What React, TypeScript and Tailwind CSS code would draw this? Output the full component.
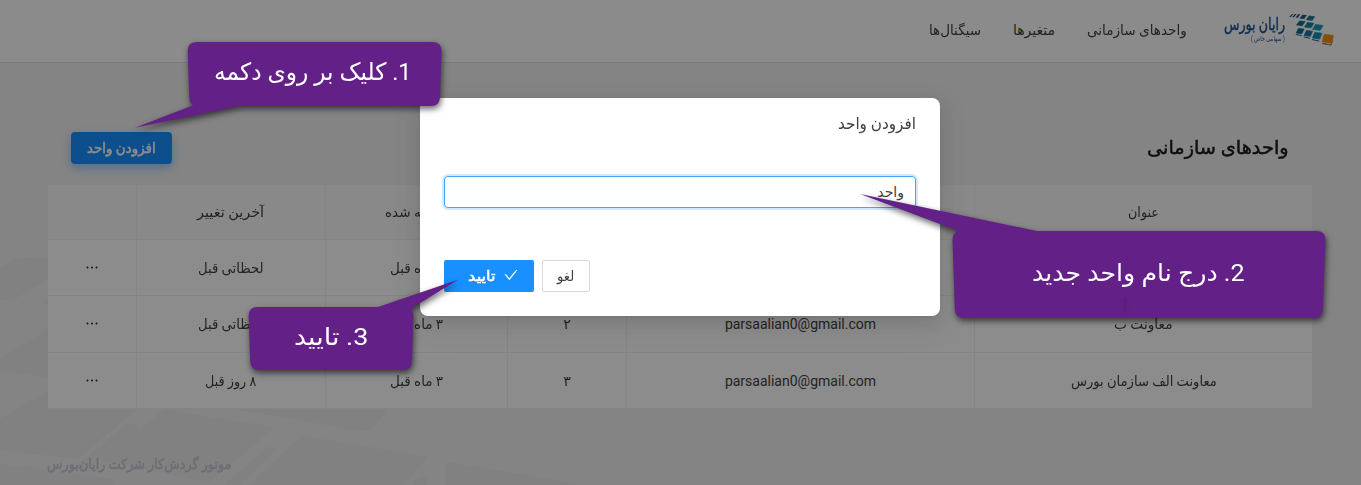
import { useLayoutEffect, useRef, type ReactNode } from "react";
import { AiOutlineCheck } from "react-icons/ai";

const FONT = "font-['Roboto','DejaVu_Sans',sans-serif]";
const MEDIUM = "[-webkit-text-stroke:0.5px_currentColor]";

/* Text condensed horizontally so that it fills the width of its box. */
function Fit({ className = "", children }: { className?: string; children: ReactNode }) {
  const box = useRef<HTMLSpanElement>(null);
  const ink = useRef<HTMLSpanElement>(null);
  useLayoutEffect(() => {
    if (!box.current || !ink.current) return;
    const k = box.current.clientWidth / ink.current.offsetWidth;
    ink.current.style.transform = `scaleX(${k})`;
  }, []);
  return (
    <span ref={box} className={`flex shrink-0 justify-start ${className}`}>
      <span ref={ink} className="inline-block shrink-0 origin-right whitespace-nowrap">
        {children}
      </span>
    </span>
  );
}

function Logo() {
  return (
    <svg width="46" height="34" viewBox="1289 13 46 34" className="shrink-0">
      <g fill="#1d5f80">
        <path d="M1292 14h1.300l-2.400 3h-1.700zM1294.800 14h1.700l-2.400 3.300h-1.900zM1298 14.300h2.300l-2.300 3.400h-2.500z" />
        <path d="M1302.500 14.700l4.300.4-2.600 3.900-4.800-.6z" />
        <path d="M1309 15.500l6.200 1-3 4.300-6.300-.9z" fill="#20789a" />
      </g>
      <g strokeLinejoin="round" strokeWidth=".8">
        <path d="M1299.500 21l5.500.6-2.700 4-5.700-.6z" fill="#11708e" stroke="#11708e" />
        <path d="M1307.500 22.500l6.300.8-2.800 4.500-6.400-.8z" fill="#13839f" stroke="#13839f" />
        <path d="M1315.500 24.500l7.500 1-2.800 4.800-7.500-1z" fill="#1798b8" stroke="#1798b8" />
        <path d="M1298.500 28.500l5.500.7-2.300 4.500-5.400-.8z" fill="#0d6c90" stroke="#0d6c90" />
        <path d="M1306.500 30.500l6 .8-2.300 5-6-.9z" fill="#13799a" stroke="#13799a" />
        <path d="M1314.800 32.500l7 .8-2.300 5.800-7-1.200z" fill="#0d90b8" stroke="#0d90b8" />
        <path d="M1324.500 34.700l8.500 1-1.700 7-8.500-1.200z" fill="#ee9310" stroke="#ee9310" strokeWidth="1.500" />
      </g>
      <path d="M1295.800 34.500l6 1.100M1303.700 37l6.200 1.200M1312 39.500l7.200 1.600M1322 43.300l9 1.700" fill="none" stroke="#2b5f93" strokeWidth="1" />
      <path d="M1322 43.500l9.300 1.500 1.500-5" fill="none" stroke="#c98b3a" strokeWidth=".9" />
    </svg>
  );
}

function Dots() {
  return (
    <svg width="12" height="3" viewBox="0 0 12 3" fill="#262626">
      <circle cx="1.500" cy="1.500" r="1" />
      <circle cx="6" cy="1.500" r="1" />
      <circle cx="10.500" cy="1.500" r="1" />
    </svg>
  );
}

const cell = "flex items-center justify-center border-l border-b border-[#f0f0f0]";
const headCell = `${cell} bg-[#fafafa]`;

type RowData = {
  title?: ReactNode;
  email?: string;
  count?: string;
  changed: ReactNode;
};

function Row({ title, email, count, changed }: RowData) {
  return (
    <>
      <div className={cell}>{title}</div>
      <div className={cell}>{email && <Fit className="w-[151px]">{email}</Fit>}</div>
      <div className={cell}>{count}</div>
      <div className={cell}>
        <Fit className="w-[53px]">۳ ماه قبل</Fit>
      </div>
      <div className={cell}>{changed}</div>
      <div className={`${cell} border-l-0 pb-px`}>
        <Dots />
      </div>
    </>
  );
}

function Backdrop() {
  return (
    <svg className="absolute inset-0" width="1361" height="485" viewBox="0 0 1361 485">
      <g fill="#ececec" stroke="#ececec" strokeWidth="3" strokeLinejoin="round">
        <path d="M-3 271l23-13 30 3v15L14 298l-17 1z" />
        <path d="M50 299l-6 3 6 2z" />
        <path d="M-3 363L50 329v48L-3 369z" />
        <path d="M-3 422L50 391v19h84L77 458-3 448z" />
        <path d="M126 426l7-1 4 3-53 42-8-1z" />
        <path d="M165 411l107 17-64 53-106-22z" />
        <path d="M243 409h143l-16 20-19-1z" />
        <path d="M302 437l124 21-28 30H248z" />
        <path d="M268 448l7 2-40 38h-12z" />
        <path d="M-3 464l117 17-8 7H-3z" />
        <path d="M447 466q4-3 12-1l125 22H447z" />
        <path d="M417 480l8-3 2 3-5 8h-10z" />
      </g>
    </svg>
  );
}

function CalloutShapes() {
  return (
    <svg className="absolute inset-0" width="1361" height="485" viewBox="0 0 1361 485">
      <g fill="#632187" className="[filter:drop-shadow(1px_3px_3px_rgba(0,0,0,0.6))]">
        <path d="M197 42H432.500Q441.700 42 441.500 51L440 97Q439.700 106 430.700 106H240L135 127.800 193 105.300Q189.500 102.500 189.200 97L187.700 51Q187.500 42 197 42z" />
        <path d="M378 307L458 279.800 410.500 309Q413.500 311.500 413.400 316L412 361Q411.700 370 403 370H259Q250.500 370 250.200 361L248.600 316Q248.500 307 257.500 307z" />
        <path d="M1037 231H1316.500Q1325.700 231 1325.500 240L1323 309Q1322.700 318 1313.700 318H964Q955 318 954.800 309L952.500 240Q952.500 233.500 958.500 231L860 194z" />
      </g>
      <path d="M1125 297v16" stroke="#4f1a70" strokeWidth="4" opacity=".5" className="blur-[1.500px]" />
    </svg>
  );
}

export default function App() {
  return (
    <div
      dir="rtl"
      className={`relative h-[485px] w-[1361px] overflow-hidden bg-[#f0f0f0] text-[14px] leading-[22px] text-[#404040] ${FONT}`}
    >
      <Backdrop />
      <div className="relative flex h-full flex-col">
        <header className="flex h-[63px] shrink-0 border-b border-[#dedede] bg-[#fdfdfd] pr-[26px]">
          <div className="flex pt-[13px]">
            <Logo />
            <div className="mr-1 flex flex-col items-start text-[#1f5491]">
              <Fit className={`w-[61px] text-[17px] leading-[22px] ${MEDIUM}`}>رایان بورس</Fit>
              <Fit className="w-[34px] text-[7px] leading-[8px]">( سهامی خاص )</Fit>
            </div>
          </div>
          <nav className="mr-[37px] flex gap-8 pt-[19px]">
            <Fit className="w-[100px]">واحدهای سازمانی</Fit>
            <Fit className="w-[42px]">متغیرها</Fit>
            <Fit className="w-[52px]">سیگنال‌ها</Fit>
          </nav>
        </header>
        <main className="pr-[49px] pl-12">
          <div className="flex h-[122px] items-start justify-between px-[23px] pt-[69px]">
            <Fit className={`w-[142px] text-[19px] leading-[32px] text-[#1c1c1c] ${MEDIUM}`}>واحدهای سازمانی</Fit>
            <button className="flex h-8 w-[101px] items-center justify-center rounded bg-[#1890ff] text-white shadow-[0_4px_10px_rgba(24,144,255,0.4)]">
              <Fit className={`w-[69px] ${MEDIUM}`}>افزودن واحد</Fit>
            </button>
          </div>
          <div className="grid h-[223px] grid-cols-[338px_348px_119px_182px_189px_88px] grid-rows-[55px_56px_57px_56px] bg-white">
            <div className={headCell}>
              <Fit className="w-[31px]">عنوان</Fit>
            </div>
            <div className={headCell} />
            <div className={headCell} />
            <div className={headCell}>
              <Fit className="w-[62px]">اضافه شده</Fit>
            </div>
            <div className={headCell}>
              <Fit className="w-[67px]">آخرین تغییر</Fit>
            </div>
            <div className={`${headCell} border-l-0`} />
            <Row changed={<Fit className="w-[66px]">لحظاتی قبل</Fit>} />
            <Row
              title={<Fit className="w-[59px]">معاونت ب</Fit>}
              email="parsaalian0@gmail.com"
              count="۲"
              changed={<Fit className="w-[66px]">لحظاتی قبل</Fit>}
            />
            <Row
              title={<Fit className="w-[146px]">معاونت الف سازمان بورس</Fit>}
              email="parsaalian0@gmail.com"
              count="۳"
              changed={<Fit className="w-[51px]">۸ روز قبل</Fit>}
            />
          </div>
        </main>
        <footer className="flex justify-end pt-[45px] pl-[47px] text-[#c6c6d4]">
          <Fit className={`w-[184px] ${MEDIUM}`}>موتور گردش‌کار شرکت رایان‌بورس</Fit>
        </footer>
      </div>

      <div className="absolute inset-0 flex items-start bg-black/45 pt-[98px] pr-[421px]">
        <section className="flex h-[218px] w-[520px] flex-col rounded-lg bg-white px-6 pt-[15px] shadow-[0_3px_6px_-4px_rgba(0,0,0,0.12),0_6px_16px_0_rgba(0,0,0,0.08),0_9px_28px_8px_rgba(0,0,0,0.05)]">
          <Fit className="w-[78px] text-[16px]">افزودن واحد</Fit>
          <div className="mt-[41px] flex h-8 items-center rounded border border-[#40a9ff] px-[11px] shadow-[0_0_0_2px_rgba(24,144,255,0.2)]">
            <Fit className="w-[27px]">واحد</Fit>
          </div>
          <div className="mt-[52px] flex justify-end gap-2">
            <button className="flex h-8 w-12 items-center justify-center rounded-xs border border-[#d9d9d9] bg-white">
              <Fit className="w-[17px]">لغو</Fit>
            </button>
            <button className="flex h-8 w-[90px] items-center gap-[7px] rounded-xs bg-[#1890ff] pr-[15px] text-white">
              <AiOutlineCheck className="size-4 -translate-y-px" />
              <Fit className={`w-[28px] ${MEDIUM}`}>تایید</Fit>
            </button>
          </div>
        </section>
      </div>

      <CalloutShapes />
      <div className="absolute top-[56px] left-[214px] flex text-[24px] leading-8 text-white">
        <Fit className="w-[197px]">1. کلیک بر روی دکمه</Fit>
      </div>
      <div className="absolute top-[257px] left-[1032px] flex text-[24px] leading-8 text-white">
        <Fit className="w-[213px]">2. درج نام واحد جدید</Fit>
      </div>
      <div className="absolute top-[321px] left-[294px] flex text-[24px] leading-8 text-white">
        <Fit className="w-[74px]">3. تایید</Fit>
      </div>
    </div>
  );
}
